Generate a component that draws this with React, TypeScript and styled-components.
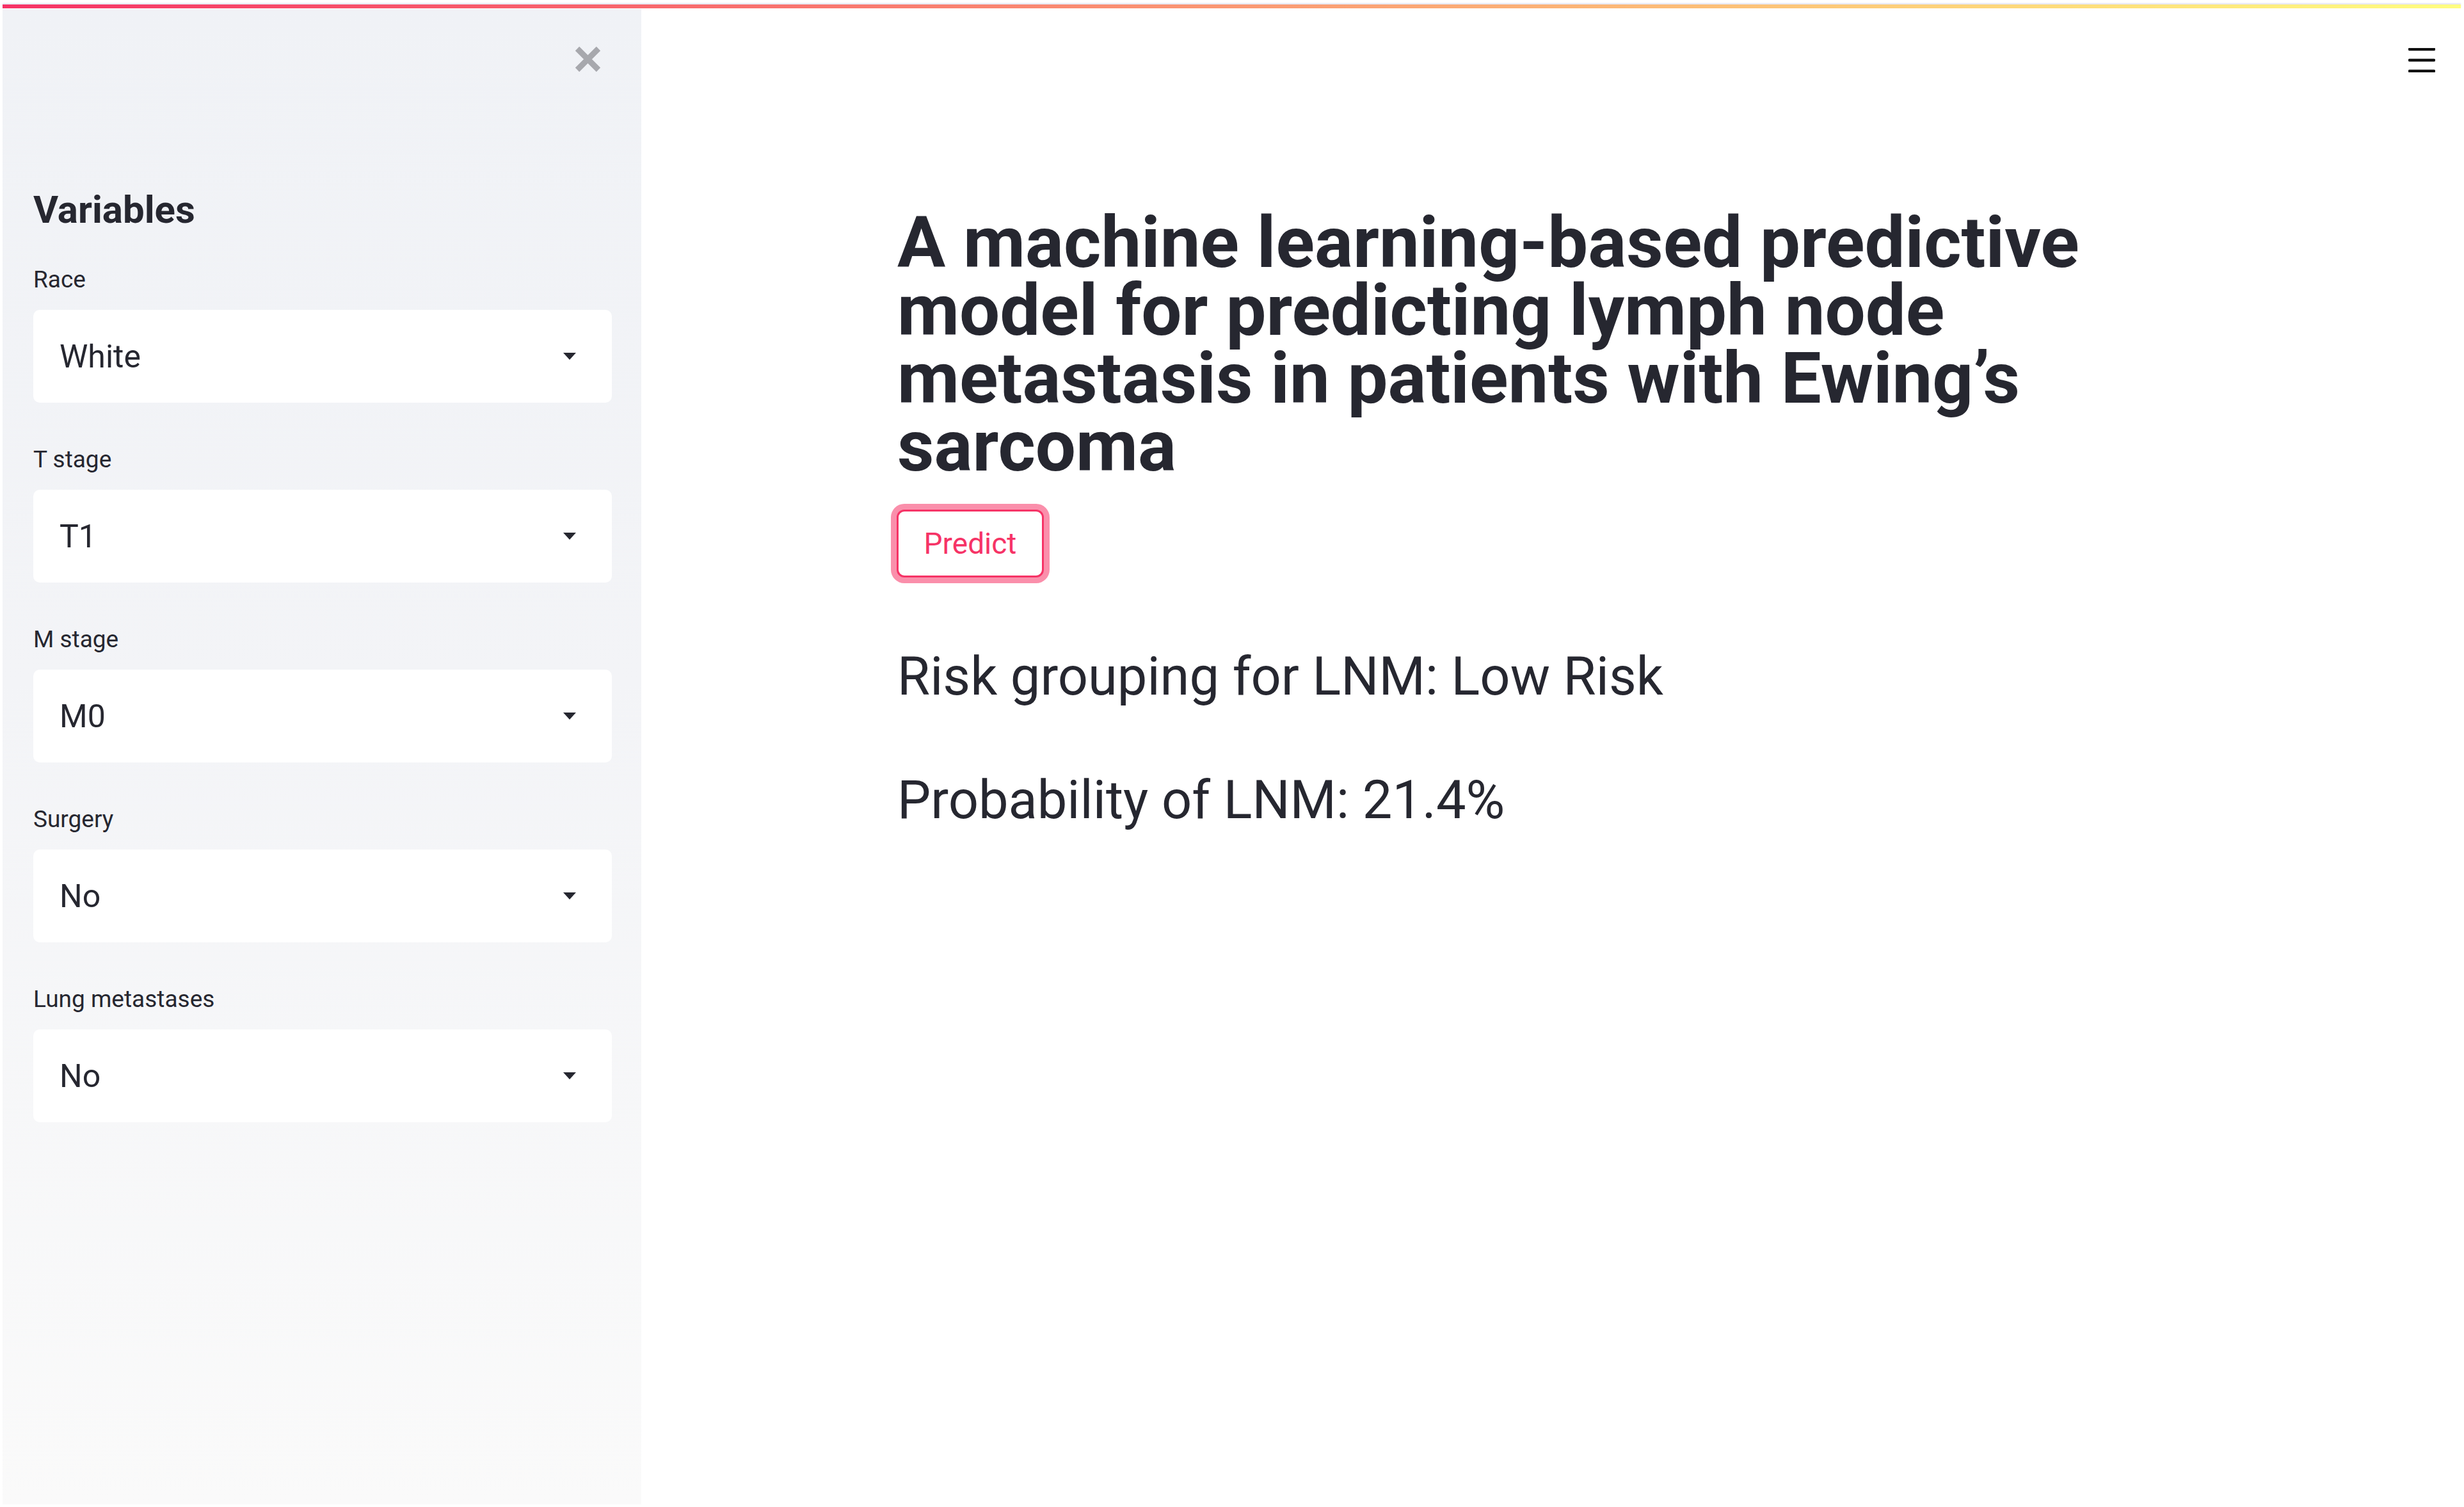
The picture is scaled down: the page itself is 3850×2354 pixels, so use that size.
import React from "react"
import styled, { createGlobalStyle } from "styled-components"

const GlobalStyle = createGlobalStyle`
    html, body {
        margin: 0;
        padding: 0;
        background: #ffffff;
    }
    body {
        font-family: Roboto, "Liberation Sans", Arial, sans-serif;
        color: #262730;
    }
`

const Page = styled.div`
    position: relative;
    display: flex;
    box-sizing: border-box;
    width: 3850px;
    height: 2354px;
    padding: 14px 4px 4px 4px;
    overflow: hidden;
`

const Decoration = styled.div`
    position: absolute;
    top: 7px;
    left: 4px;
    right: 5px;
    height: 6px;
    background: linear-gradient(90deg, #f63366, #fffd80);
    box-shadow: 0 -2px 2px rgba(180, 180, 220, 0.35);
    z-index: 2;
`

const Sidebar = styled.aside`
    flex: 0 0 998px;
    box-sizing: border-box;
    padding: 58px 46px 0 48px;
    background: linear-gradient(180deg, #f0f2f6 0%, #f3f4f7 45%, #fafafa 100%);
`

const CloseRow = styled.div`
    display: flex;
    justify-content: flex-end;
    height: 41px;
    padding-right: 16px;
`

const CloseButton = styled.button`
    width: 43px;
    height: 41px;
    padding: 0;
    border: none;
    background: none;
    cursor: pointer;
`

const SideHeading = styled.h2`
    margin: 180px 0 54px 0;
    font-size: 60px;
    line-height: 70px;
    font-weight: 700;
    color: #262730;
`

const Fields = styled.div`
    display: flex;
    flex-direction: column;
    gap: 69px;
`

const Field = styled.div`
    display: flex;
    flex-direction: column;
    gap: 27px;
`

const Label = styled.label`
    font-size: 37px;
    line-height: 40px;
    color: #262730;
`

const SelectBox = styled.div`
    display: flex;
    align-items: center;
    justify-content: space-between;
    box-sizing: border-box;
    height: 145px;
    padding: 0 56px 0 41px;
    border-radius: 10px;
    background: #ffffff;
    font-size: 50px;
    color: #262730;
    cursor: pointer;
`

const Main = styled.main`
    flex: 1;
    display: flex;
    flex-direction: column;
`

const TopBar = styled.header`
    display: flex;
    justify-content: flex-end;
    padding: 61px 41px 0 0;
`

const MenuButton = styled.button`
    width: 42px;
    height: 38px;
    padding: 0;
    border: none;
    background: none;
    cursor: pointer;
`

const Content = styled.section`
    width: 2044px;
    margin: 213px auto 0 auto;
`

const Title = styled.h1`
    margin: 0;
    font-size: 112px;
    line-height: 106px;
    font-weight: 700;
    color: #262730;
`

const PredictButton = styled.button`
    display: block;
    box-sizing: border-box;
    width: 230px;
    height: 106px;
    margin: 46px 0 93px -1px;
    border: 3px solid #f63366;
    border-radius: 12px;
    background: #ffffff;
    box-shadow: 0 0 0 9px rgba(246, 51, 102, 0.55);
    font-family: Roboto, "Liberation Sans", Arial, sans-serif;
    font-size: 46px;
    color: #f63366;
    cursor: pointer;
`

const Result = styled.p`
    margin: 0 0 70px 0;
    font-size: 83px;
    line-height: 123px;
    font-weight: 400;
    color: #262730;
`

const fields = [
    { label: "Race", value: "White" },
    { label: "T stage", value: "T1" },
    { label: "M stage", value: "M0" },
    { label: "Surgery", value: "No" },
    { label: "Lung metastases", value: "No" },
]

const CloseIcon = () => (
    <svg width="43" height="41" viewBox="0 0 43 41">
        <path d="M5 4 L38 37 M38 4 L5 37" stroke="#a7a8ad" strokeWidth="9" />
    </svg>
)

const ArrowIcon = () => (
    <svg width="20" height="11" viewBox="0 0 20 11">
        <path d="M0 0 H20 L10 11 Z" fill="#262730" />
    </svg>
)

const MenuIcon = () => (
    <svg width="42" height="38" viewBox="0 0 42 38">
        <path d="M2 2 H40 M2 19 H40 M2 36 H40" stroke="#111" strokeWidth="4.5" strokeLinecap="round" />
    </svg>
)

const App = () => {
    return <>
        <GlobalStyle />
        <Page>
            <Decoration />
            <Sidebar>
                <CloseRow>
                    <CloseButton aria-label="Close sidebar"><CloseIcon /></CloseButton>
                </CloseRow>
                <SideHeading>Variables</SideHeading>
                <Fields>
                    {fields.map(f => (
                        <Field key={f.label}>
                            <Label>{f.label}</Label>
                            <SelectBox>
                                <span>{f.value}</span>
                                <ArrowIcon />
                            </SelectBox>
                        </Field>
                    ))}
                </Fields>
            </Sidebar>
            <Main>
                <TopBar>
                    <MenuButton aria-label="Menu"><MenuIcon /></MenuButton>
                </TopBar>
                <Content>
                    <Title>A machine learning-based predictive model for predicting lymph node metastasis in patients with Ewing’s sarcoma</Title>
                    <PredictButton>Predict</PredictButton>
                    <Result>Risk grouping for LNM: Low Risk</Result>
                    <Result>Probability of LNM: 21.4%</Result>
                </Content>
            </Main>
        </Page>
    </>
}

export default App
